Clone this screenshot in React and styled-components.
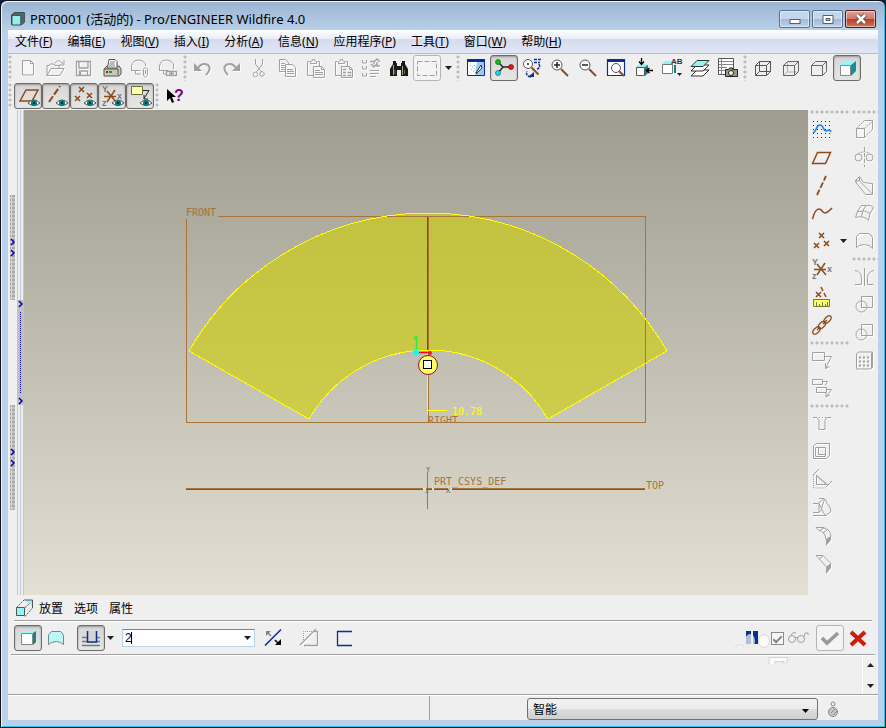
import React, { useState } from "react";
import styled, { createGlobalStyle, css } from "styled-components";

const GRAY = "#a0a0a0";
const BROWN = "#8f4a1c";
const NAVY = "#0a2f91";
const DARK = "#555555";

const P = ({ d, c = GRAY, w = 1, f = "none", dash }) => (
  <path d={d} stroke={c} strokeWidth={w} fill={f} strokeDasharray={dash} />
);

const Letter = ({ x, y, c = "#777777", size = 8, children }) => (
  <text
    x={x}
    y={y}
    fill={c}
    fontSize={size}
    fontWeight="700"
    fontFamily="Liberation Sans, sans-serif"
  >
    {children}
  </text>
);

const Eye = () => (
  <g>
    <P d="M10 17q6-6 12 0q-6 5-12 0z" c="#555555" f="#ffffff" />
    <circle cx="16" cy="17" r="3" fill="#007c7c" />
    <circle cx="16" cy="17" r="1" fill="#001818" />
  </g>
);

const Crosses = ({ points }) =>
  points.map(([x, y]) => (
    <P
      key={`${x}-${y}`}
      d={`M${x - 2} ${y - 2}l5 5M${x + 3} ${y - 2}l-5 5`}
      c={BROWN}
      w={1.6}
    />
  ));

const Csys = () => (
  <g>
    <P d="M2 10.5h12M5 16L13 4M5 5l9 11" c={BROWN} w={1.5} />
    <Letter x={0} y={6} size={9}>Y</Letter>
    <Letter x={0} y={20} size={9}>z</Letter>
    <Letter x={15} y={13} size={9}>x</Letter>
  </g>
);

const Lens = ({ x = 7, y = 7, r = 5 }) => (
  <g>
    <P
      d={`M${x + r - 1} ${y + r - 1}L${x + r + 6} ${y + r + 6}`}
      c={BROWN}
      w={2}
    />
    <circle cx={x} cy={y} r={r} fill="#ffffff" stroke={DARK} />
  </g>
);

const Clipboard = () => (
  <g>
    <P d="M8 17.5H2.5v-14h2M12.5 3.5h2v5M5.5 5.5v-2l2-1v-1h2v1l2 1v2z" />
    <P d="M8.5 8.5h8l3 3v8h-11zM16.5 8.5v3h3" f="#f6f6f6" />
  </g>
);

const icons = {
  app: (
    <g>
      <P d="M2 5l3-3h13v12l-3 3H2z" c="#333333" f="#4a6d70" />
      <P d="M2.5 5.5h11v12h-11z" c="#333333" f="#8eeaea" />
      <P d="M4 8h8M4 11h8M4 14h8" c="#d8ffff" dash="1 1" />
    </g>
  ),
  new: <P d="M4.5 2.5h8l3 3v11.5h-11zM12.5 2.5v3h3" f="#f6f6f6" />,
  open: (
    <g>
      <P d="M1 17.5v-10h2l1-1.5h4l1 1.5h4v3M1 17.5L5 10.5h13l-4 7z" />
      <P d="M9 5q3-4 6-1l2 2M18 2v5h-5" />
    </g>
  ),
  save: <P d="M2.5 3.5h14v14h-14zM5 4v6h9V4M5.5 17v-4h8v4M6.5 14v3" w={1.3} />,
  print: (
    <g>
      <P d="M2 11l3-3h12l2 3v5l-2 2H2z" c={DARK} f="#c9c9b8" />
      <P d="M5.5 10L7 1.5h6l2 2V10z" c={DARK} f="#ffffff" />
      <P d="M8 4h5M7.5 6h5M7 8h6" c="#777777" />
      <P d="M2 11h14v6" c={DARK} />
      <P d="M4 14h2" c="#d01010" w={2} />
      <P d="M7 14h3" c="#10a020" w={2} />
    </g>
  ),
  mailClip: (
    <g>
      <P d="M1.5 13V8q1-6 7-6q5 0 7 4v2M1.5 12.5h9M5.5 13v3h5" />
      <P d="M13.5 17v-6q2-3 4 0v6q-2 4-4 0zM15.5 12v4" f="#f6f6f6" />
    </g>
  ),
  mailLink: (
    <g>
      <P d="M1.5 13V8q1-6 7-6q5 0 7 4v5M1.5 12.5h9M5.5 13v3h3" />
      <P d="M8.5 13.5h5v4h-5zM13.5 13.5h5v4h-5zM11 15.5h5" w={1.4} />
    </g>
  ),
  undo: (
    <g>
      <path d="M1 5v8h8z" fill={GRAY} />
      <P d="M5 10q4-6 10-3q4 4-2 10" w={2} />
    </g>
  ),
  redo: (
    <g>
      <path d="M19 5v8h-8z" fill={GRAY} />
      <P d="M15 10q-4-6-10-3q-4 4 2 10" w={2} />
    </g>
  ),
  cut: (
    <g>
      <P d="M6.5 1v5l6 8M13.5 1v5l-6 8" />
      <circle cx="6.5" cy="16.5" r="2.3" stroke={GRAY} fill="none" />
      <circle cx="13" cy="16" r="2.3" stroke={GRAY} fill="none" />
    </g>
  ),
  copy: (
    <g>
      <P d="M2.5 1.5h6l3 3v9h-9zM4 5.5h4M4 7.5h6M4 9.5h6M4 11.5h6" />
      <P d="M8.5 6.5h7l3 3v9h-10zM10 11.5h6M10 13.5h7M10 15.5h7" f="#f6f6f6" />
    </g>
  ),
  paste: (
    <g>
      <Clipboard />
      <P d="M10 12.5h5M10 14.5h8M10 16.5h8" />
    </g>
  ),
  pasteSpecial: (
    <g>
      <Clipboard />
      <P d="M10 11.5h3M10 14.5h3M10 17.5h3M14.5 14.5h4M14.5 17.5h4" w={1.6} />
    </g>
  ),
  regen: (
    <g>
      <P d="M1.5 2v3h4V2M1.5 8v3h4V8M1.5 15v3h4v-3M9 12.5h9M9 15.5h9M9 18.5h6" />
      <P d="M9 3.5h4v3M10 6l3 3l3-3M19 8h-3V4M13 4l3-3l3 3" w={1.4} />
    </g>
  ),
  find: (
    <g>
      <path
        d="M4 3h3v2h1v3h4V5h1V3h3v3l3 5v7h-7v-6H8v6H1v-7l3-5z"
        fill="#1b1b16"
      />
      <P d="M4.5 7v10M13.5 8v9" c="#a9a98e" />
      <P d="M6 12v4M15.5 12v4" c="#6d6d58" />
    </g>
  ),
  select: <P d="M.5 3.5h19v14h-19z" dash="5 2" />,
  repaint: (
    <g>
      <P d="M1.5 1.5h17v16h-17z" c={NAVY} f="#ffffff" />
      <path d="M11 4h7v13H9z" fill="#9ccbf5" />
      <path d="M1 1h18v3H1z" fill={NAVY} />
      <P d="M4 7l8 7M5 11l6 5M8 7l4 5" c="#4aa0dd" dash="1 2" />
      <P d="M15 7l-5 8M15 7l1 3l-6 6" c="#333333" f="#ffffff" />
    </g>
  ),
  spin: (
    <g>
      <P d="M4 4l5 5h8M9 9l-5 6" c="#222222" w={1.4} />
      <circle cx="4" cy="4" r="2.5" fill="#10c010" stroke="#0a500a" strokeWidth=".6" />
      <circle cx="17" cy="9" r="2.5" fill="#f01010" stroke="#600000" strokeWidth=".6" />
      <circle cx="4" cy="15" r="2.5" fill="#22d8e8" stroke="#045058" strokeWidth=".6" />
    </g>
  ),
  orient: (
    <g>
      <Lens x={6} y={6} r={4.5} />
      <circle cx="6" cy="6" r="1" fill="#222222" />
      <P d="M12 1.5h7M12 4.5h6M17 6q2 4-2 5M9 19q-6-1-4-6" c={NAVY} w={1.5} dash="3 1" />
      <path d="M6 19h6v-5z" fill={NAVY} />
    </g>
  ),
  zoomIn: (
    <g>
      <Lens />
      <P d="M4 7h6M7 4v6" c="#222222" w={1.5} />
    </g>
  ),
  zoomOut: (
    <g>
      <Lens />
      <P d="M4 7h6" c="#222222" w={1.5} />
    </g>
  ),
  refit: (
    <g>
      <P d="M1.5 1.5h17v16h-17z" c={NAVY} w={1.2} f="#ffffff" />
      <path d="M1 1h18v3H1z" fill={NAVY} />
      <P d="M13 13l5 5" c={BROWN} w={2} />
      <circle cx="10" cy="10" r="4.5" fill="#ffffff" stroke={DARK} />
    </g>
  ),
  views: (
    <g>
      <P d="M2.5 9l3-2h8l-2 2z" c="#7fe7e7" f="#a5ffff" />
      <path d="M11 9l3-2v8l-3 3z" fill="#0b8585" />
      <P d="M2.5 9.5h8v8h-8z" c={DARK} f="#ffffff" />
      <P d="M7.5 0v6M5 3.5l2.5 3l2.5-3M19 12.5h-7M15.5 10l-3 2.5l3 2.5" c="#000000" w={1.3} />
    </g>
  ),
  viewNames: (
    <g>
      <path d="M0 6l3-3h7v3z" fill="#8ff5f5" />
      <P d="M.5 6.5h10v9H.5z" c="#777777" f="#ffffff" />
      <P d="M13 7v8" c="#0b8585" w={2} />
      <Letter x={9} y={6} c="#333333">AB</Letter>
      <path d="M15 15h5l-2.5 3z" fill="#222222" />
    </g>
  ),
  layers: (
    <g>
      <P d="M1 18l6-6h12l-6 6z" c="#333333" f="#ffffff" />
      <P d="M1 13l6-6h12l-6 6z" c="#333333" f="#ffffff" />
      <P d="M1 8.5l6-6h12l-6 6z" c="#333333" f="#8ff5ee" />
    </g>
  ),
  viewManager: (
    <g>
      <P d="M.5 .5h15v16H.5z" c={DARK} f="#ffffff" />
      <P d="M3.5 1v15M1 3.5h14M1 6.5h14M1 9.5h8M1 12.5h7" c="#888888" />
      <P d="M7.5 11.5h3l1-1.5h3v1.5h5v7h-12z" c="#222222" f="#99997f" />
      <circle cx="13" cy="15" r="2.5" fill="#f3f3e8" stroke="#222222" />
    </g>
  ),
  wireframe: (
    <P d="M2.5 7.5h11v10h-11zM6.5 3.5h11v10h-11zM2.5 7.5l4-4M13.5 7.5l4-4M13.5 17.5l4-4M2.5 17.5l4-4" c={DARK} />
  ),
  hidden: (
    <g>
      <P d="M6.5 4v10h11M2.5 17.5l4-4" c="#b0b0b0" />
      <P d="M2.5 7.5h11v10h-11zM2.5 7.5l4-4h11v10l-4 4M13.5 7.5l4-4" c="#666666" />
    </g>
  ),
  noHidden: (
    <P d="M2.5 7.5h11v10h-11zM2.5 7.5l4-4h11v10l-4 4M13.5 7.5l4-4" c="#666666" />
  ),
  shaded: (
    <g>
      <path d="M3 7l4-4h12l-4 4z" fill="#8ffafa" />
      <path d="M14 7l5-4v10l-5 5z" fill="#178f92" />
      <P d="M3.5 7.5h10v10h-10z" c="#888888" f="#ffffff" />
    </g>
  ),
  planeShow: (
    <g>
      <P d="M2 15L8 4h12l-6 11z" c={BROWN} w={1.5} />
      <Eye />
    </g>
  ),
  axisShow: (
    <g>
      <P d="M3 16L14 0" c={BROWN} w={2} dash="7 2" />
      <Eye />
    </g>
  ),
  pointShow: (
    <g>
      <Crosses points={[[7, 3], [3, 12], [15, 9]]} />
      <Eye />
    </g>
  ),
  csysShow: (
    <g>
      <Csys />
      <Eye />
    </g>
  ),
  noteShow: (
    <g>
      <P d="M1.5 .5h11v8h-11z" c="#6d6d40" f="#ffffb0" />
      <P d="M13 4.5h6l-5 8M14 9v4h4" c="#222222" />
      <Eye />
    </g>
  ),
  help: (
    <g>
      <path d="M2 3v12l3-3l2 5l2-1l-2-5h4z" fill="#000000" />
      <Letter x={9} y={15} c="#800080" size={16}>?</Letter>
    </g>
  ),
  sketch: (
    <g>
      <P d="M1 2.5h18M1 6.5h18M1 10.5h18M1 14.5h18M1 18.5h18" c={NAVY} dash="1 3" />
      <P d="M1 14C5 12 4 6 8 6S11 12 14 12S17 9 19 13" c="#1587ee" w={1.6} />
    </g>
  ),
  plane: <P d="M.5 16.5L5.5 5.5h13l-5 11z" c={BROWN} w={1.5} />,
  axis: <P d="M5 20L14 1" c={BROWN} w={1.8} dash="6 2" />,
  curve: <P d="M.5 16Q3 6 7 6q2 0 4 3q3 3 9-4" c={BROWN} w={1.5} />,
  points: <Crosses points={[[9, 4], [4, 14], [14, 12]]} />,
  csys: <Csys />,
  analysis: (
    <g>
      <Crosses points={[[6, 7]]} />
      <P d="M9 0l2 4M12 6l2 4" c={BROWN} w={1.6} />
      <P d="M1.5 12.5h16v7h-16z" c="#77773c" f="#ffff66" />
      <P d="M4.5 15v4M7.5 17v2M10.5 15v4M13.5 17v2M15.5 15v4" c="#77773c" />
    </g>
  ),
  chain: (
    <g fill="none" stroke={BROWN} strokeWidth="1.3">
      <ellipse cx="4.5" cy="15.5" rx="4.5" ry="2.5" transform="rotate(-45 4.5 15.5)" />
      <ellipse cx="10" cy="10" rx="4.5" ry="2.5" transform="rotate(-45 10 10)" />
      <ellipse cx="15.5" cy="4.5" rx="4.5" ry="2.5" transform="rotate(-45 15.5 4.5)" />
      <path d="M5 15l3-3M11 9l4-4" />
    </g>
  ),
  note: <P d="M.5 2.5h12v8H.5zM12.5 6.5h7l-6 12M13.5 13v5.5l4-2" />,
  noteChain: (
    <P d="M.5 1.5h10v5H.5zM10.5 3.5h5l-2 4M4.5 9.5h10v5h-10zM14.5 11.5h5l-5 7M14 15v4l4-2" />
  ),
  hole: (
    <g>
      <P d="M1 4.5h4l2 3v9h6v-9l2-3h4" />
      <P d="M7 4.5h7" dash="1 2" />
    </g>
  ),
  shell: (
    <P d="M1.5 5l3-2.5h13v12l-3 3h-13zM3.5 6.5h10v9h-10zM6.5 6.5v7h7" />
  ),
  rib: (
    <g>
      <P d="M1.5 6v13h12" dash="1 1" />
      <P d="M1 6l6-6M14 18l6-6M4.5 6.5v9h10zM4.5 6.5L16 16" />
    </g>
  ),
  draft: (
    <P d="M1 18.5h13l5-4q0-5-4-8q-1-4-3-5H7M1 6.5h5l6-5M1 15.5h6v-9M7 15.5l3-3l-3-6M10 12.5l3 5.5M12.5 2l-3 10" />
  ),
  round: (
    <g>
      <P d="M4 2.5h7q8 2 8 9M4 2.5l3 3q6 1 7 9M8 5l4-2M11 8l4-3" />
      <path d="M14 14l5-3v4l-5 6z" fill={GRAY} />
    </g>
  ),
  chamfer: (
    <g>
      <P d="M4 2.5h7l8 8M4 2.5l3 3l7 8" />
      <P d="M7 6l4-3" />
      <path d="M14 14l5-4v5l-5 6z" fill={GRAY} />
    </g>
  ),
  extrude: (
    <g>
      <P d="M2.5 9.5h8v9h-8z" f="#f6f6f6" />
      <P d="M2.5 9.5l8-8M10.5 9.5l8-7M10.5 18.5l8-8" dash="2 1" />
      <P d="M10.5 1.5h8v9" />
    </g>
  ),
  revolve: (
    <g>
      <P d="M10.5 0v20" dash="4 2" />
      <circle cx="4.5" cy="10.5" r="3.5" fill="none" stroke={GRAY} />
      <circle cx="15.5" cy="10.5" r="3.5" fill="none" stroke={GRAY} />
      <P d="M4 6.5l6-2l6 2" dash="2 1" />
    </g>
  ),
  sweep: (
    <P d="M1.5 5.5l4-4l4 6l9 1v11h-7L2.5 8zM1.5 5.5l1 3M5.5 2v4l13 13M1.5 5.5l4 .5" />
  ),
  boundary: (
    <P d="M1.5 14.5Q3 7 7.5 2.5h9l3 2Q15 10 14.5 17.5Q10 12 1.5 14.5zM4 8.5q7-2 12 2M12 2.5Q8 7 7.5 13.5" />
  ),
  style: <P d="M2.5 16.5v-11l3-3h9q3 1 4 4v11q-3-4-8-4q-5 0-8 3z" />,
  mirror: <P d="M10.5 2v18M1 4.5q6 1 6.5 7v7M20 4.5q-6 1-6.5 7v7M1 18.5h6M13.5 18.5h6" />,
  merge: (
    <g fill="none" stroke={GRAY}>
      <path d="M7.5 2.5h11v11h-11z" />
      <circle cx="7.5" cy="12.5" r="5.5" />
    </g>
  ),
  pattern: (
    <g>
      <P d="M2.5 4l2-2h14v15l-2 2h-14z" />
      <path d="M17 3h2v14l-2 2z" fill={GRAY} />
      <P d="M5 7.5h11M5 11.5h11M5 15.5h11" w={2} dash="2 2" />
    </g>
  ),
  placement: (
    <g>
      <P d="M2.5 9.5l8-8M11 9.5l8-7M11 18.5l7-8" c="#555555" dash="2 1" />
      <path d="M10 2h9v8l-3-5z" fill="#8ff5f5" />
      <P d="M10.5 2h8v8" c="#555555" />
      <P d="M2.5 9.5h8v8h-8z" c="#555555" f="#8ff5f5" />
    </g>
  ),
  solid: (
    <g>
      <path d="M3 5l2-2h13l-2 3z" fill="#8ffafa" />
      <path d="M15 5l3-2v11l-3 3z" fill="#148486" />
      <P d="M3.5 5.5h11v11h-11z" c="#888888" f="#ffffff" />
    </g>
  ),
  surface: (
    <P d="M2.5 16.5v-10l3-3h9q2 1 3 4v9q-3-3-7-3q-5 0-8 3z" c="#6a8c8c" f="#bdf8f8" />
  ),
  depth: (
    <g>
      <P d="M1 9.5h18M1 13.5h18M1 17.5h18" c="#777777" w={1.5} />
      <P d="M6.5 3v11h9V3" c={NAVY} w={1.5} f="#d5d5d5" />
    </g>
  ),
  flip: (
    <g>
      <P d="M2 17.5L18 1.5" c={NAVY} w={1.6} />
      <path d="M3 3h5L3 8z" fill="#83837a" />
      <P d="M5 5l3 3" c="#83837a" w={1.5} />
      <path d="M18 11v6h-6z" fill="#000000" />
      <P d="M12 12l3 3" c="#000000" w={1.5} />
    </g>
  ),
  removeMaterial: (
    <g>
      <P d="M4.5 14V3.5H14" dash="1 1" />
      <P d="M5 17.5h13.5v-14H15M1 17L17 1" w={1.3} />
    </g>
  ),
  thicken: <P d="M17 3.5H2.5v14H17" c={NAVY} w={1.3} />,
  glasses: (
    <g fill="none" stroke={GRAY}>
      <circle cx="4" cy="11" r="3.5" />
      <circle cx="13" cy="11" r="3.5" />
      <path d="M7 9.5h3M3 7q2-4 5-2M16 9l1-4h3v2" />
    </g>
  ),
  confirm: <P d="M2 10l5 5L18 5" c="#999999" w={3.5} />,
  cancel: <P d="M3 4l14 13M17 4L3 17" c="#cf1c08" w={4} />,
  ball: (
    <g>
      <circle cx="10" cy="5" r="2" fill="none" stroke="#888888" />
      <circle cx="10" cy="13" r="4.5" fill="#c9c9c9" stroke="#888888" />
      <P d="M8 14l4-4M10 16l4-4" c="#888888" />
    </g>
  ),
};

const Icon = ({ name, size = 20 }) => (
  <IconSvg viewBox="0 0 20 20" width={size} height={size} aria-hidden="true">
    {icons[name]}
  </IconSvg>
);

const Tool = ({ name, label, pressed, framed, disabled }) => (
  <ToolButton
    type="button"
    title={label}
    aria-label={label}
    $pressed={pressed}
    $framed={framed}
    $disabled={disabled}
    disabled={disabled}
  >
    <Icon name={name} />
  </ToolButton>
);

const DropArrow = ({ label, narrow }) => (
  <ArrowButton type="button" aria-label={label} $narrow={narrow}>
    <svg width="7" height="4" viewBox="0 0 7 4" aria-hidden="true">
      <path d="M0 0h7L3.5 4z" fill="#222222" />
    </svg>
  </ArrowButton>
);

const renderTools = (tools) =>
  tools.map(([name, label, state]) => (
    <Tool
      key={label}
      name={name}
      label={label}
      pressed={state === "pressed"}
      framed={state === "framed"}
      disabled={state === "off"}
    />
  ));

const menus = [
  ["文件", "F"],
  ["编辑", "E"],
  ["视图", "V"],
  ["插入", "I"],
  ["分析", "A"],
  ["信息", "N"],
  ["应用程序", "P"],
  ["工具", "T"],
  ["窗口", "W"],
  ["帮助", "H"],
];

const fileTools = [
  ["new", "新建", "off"],
  ["open", "打开", "off"],
  ["save", "保存", "off"],
  ["print", "打印"],
  ["mailClip", "发送附件", "off"],
  ["mailLink", "发送链接", "off"],
];

const editTools = [
  ["undo", "撤消", "off"],
  ["redo", "重做", "off"],
  ["cut", "剪切", "off"],
  ["copy", "复制", "off"],
  ["paste", "粘贴", "off"],
  ["pasteSpecial", "选择性粘贴", "off"],
  ["regen", "再生", "off"],
  ["find", "查找"],
  ["select", "选取框", "framed"],
];

const viewTools = [
  ["repaint", "重画"],
  ["spin", "旋转中心", "pressed"],
  ["orient", "定向模式"],
  ["zoomIn", "放大"],
  ["zoomOut", "缩小"],
  ["refit", "重新调整"],
  ["views", "重定向"],
  ["viewNames", "已命名视图"],
  ["layers", "层"],
  ["viewManager", "视图管理器"],
];

const displayTools = [
  ["wireframe", "线框"],
  ["hidden", "隐藏线"],
  ["noHidden", "无隐藏线"],
  ["shaded", "着色", "pressed"],
];

const datumDisplayTools = [
  ["planeShow", "平面显示", "pressed"],
  ["axisShow", "轴显示", "pressed"],
  ["pointShow", "点显示", "pressed"],
  ["csysShow", "坐标系显示", "pressed"],
  ["noteShow", "注释显示", "pressed"],
];

const datumTools = [
  ["sketch", "草绘"],
  ["plane", "基准平面"],
  ["axis", "基准轴"],
  ["curve", "基准曲线"],
  ["points", "基准点"],
  ["csys", "基准坐标系"],
  ["analysis", "分析特征"],
  ["chain", "参照"],
];

const noteTools = [
  ["note", "注释"],
  ["noteChain", "注释传播"],
];

const engineeringTools = [
  ["hole", "孔"],
  ["shell", "壳"],
  ["rib", "筋"],
  ["draft", "拔模"],
  ["round", "倒圆角"],
  ["chamfer", "倒角"],
];

const shapeTools = [
  ["extrude", "拉伸"],
  ["revolve", "旋转"],
  ["sweep", "扫描"],
  ["boundary", "边界混合"],
  ["style", "造型"],
];

const featureTools = [
  ["mirror", "镜像"],
  ["merge", "合并"],
  ["merge", "修剪"],
  ["pattern", "阵列"],
];

const SideToolGroup = ({ tools, disabled }) => (
  <SideGroup>
    <SideGrip />
    {tools.map(([name, label]) => (
      <SideRow key={label}>
        <Tool name={name} label={label} disabled={disabled} />
        {name === "points" && <DropArrow label="基准点选项" />}
      </SideRow>
    ))}
  </SideGroup>
);

const Chevron = () => (
  <svg width="5" height="8" viewBox="0 0 5 8" aria-hidden="true">
    <path d="M1 1l3 3l-3 3" fill="none" stroke="#0000b8" strokeWidth="1.5" />
  </svg>
);

const Sashes = () => (
  <SashArea>
    <SashColumn>
      <TreeSash>
        <Chevron />
        <Chevron />
      </TreeSash>
      <TreeSash>
        <Chevron />
        <Chevron />
      </TreeSash>
    </SashColumn>
    <Splitter>
      <SplitterRail />
      <SplitterHandle>
        <Chevron />
        <SplitterDots />
        <Chevron />
      </SplitterHandle>
      <SplitterRail />
    </Splitter>
  </SashArea>
);

const fanPath =
  "M165 241A276 276 0 0 1 643 241L524 309A138 138 0 0 0 285 309Z";

const Model = () => (
  <ModelSvg viewBox="0 0 784 485" role="img" aria-label="PRT0001">
    <defs>
      <linearGradient id="fan" x1="0" y1="0" x2="0" y2="1">
        <stop offset="0" stopColor="#c2c140" />
        <stop offset="1" stopColor="#cdcc4b" />
      </linearGradient>
      <clipPath id="front-plane">
        <rect x="162" y="106" width="460" height="206" />
      </clipPath>
    </defs>

    <path d={fanPath} fill="url(#fan)" />
    <g fill="none" stroke="#a8743a" shapeRendering="crispEdges">
      <path d="M194 106.5H621.5V312.5H162.5V109" />
      <path d="M404.5 107V312" />
      <path d="M403.5 107V241" stroke="#5f5a33" />
      <path d="M162 378.5H621" />
      <path d="M162 379.5H621" stroke="#6b5846" />
      <path d="M403.5 362V399" />
    </g>
    <path
      d={fanPath}
      fill="none"
      stroke="#ffff00"
      shapeRendering="crispEdges"
    />

    <path d="M399 379h3M408 379h2M424 379h4" stroke="#e6e3d8" strokeWidth="2" />
    <path
      d="M403.5 241V305M404 300.5H423"
      stroke="#ffff00"
      shapeRendering="crispEdges"
    />
    <path d="M392.5 228V241" stroke="#33ee33" strokeWidth="1.5" />
    <path d="M395 242.5H405" stroke="#ff0022" strokeWidth="1.5" />
    <circle cx="392" cy="228" r="2" fill="#33ee33" />
    <circle cx="392" cy="242" r="3" fill="#00ffff" />
    <circle cx="406" cy="243" r="2" fill="#e02030" />
    <circle cx="404" cy="255" r="9.5" fill="#ffff66" stroke="#8b1030" />
    <rect
      x="399.5"
      y="250.5"
      width="8"
      height="8"
      fill="#ffffff"
      stroke="#000000"
    />

    <StrokeText x="162" y="106">FRONT</StrokeText>
    <g clipPath="url(#front-plane)">
      <StrokeText x="404" y="314">RIGHT</StrokeText>
    </g>
    <StrokeText x="410" y="375">PRT_CSYS_DEF</StrokeText>
    <StrokeText x="622" y="379">TOP</StrokeText>
    <StrokeText x="428" y="305" $color="#ffff00">10.78</StrokeText>
    <AxisText x="402" y="362">Y</AxisText>
    <AxisText x="422" y="383">X</AxisText>
    <AxisText x="401" y="383">z</AxisText>
  </ModelSvg>
);

const Dashboard = () => {
  const [depth, setDepth] = useState("2");
  const [preview, setPreview] = useState(true);

  return (
    <>
      <DashTabs>
        <Icon name="placement" />
        <DashTab type="button">放置</DashTab>
        <DashTab type="button">选项</DashTab>
        <DashTab type="button">属性</DashTab>
      </DashTabs>
      <Rule $inset="6px" />
      <DashTools>
        <ButtonPair>
          <Tool name="solid" label="实体" pressed />
          <Tool name="surface" label="曲面" />
        </ButtonPair>
        <ButtonPair>
          <Tool name="depth" label="深度选项" pressed />
          <DropArrow label="更多深度选项" narrow />
        </ButtonPair>
        <DepthBox>
          <DepthInput
            aria-label="深度"
            value={depth}
            onChange={(e) => setDepth(e.target.value)}
          />
          <TextCaret />
          <DropArrow label="最近使用的值" />
        </DepthBox>
        <DashActions>
          <SmallButton type="button" aria-label="反向">
            <Icon name="flip" />
          </SmallButton>
          <SmallButton type="button" aria-label="移除材料" $disabled disabled>
            <Icon name="removeMaterial" />
          </SmallButton>
          <SmallButton type="button" aria-label="加厚草绘">
            <Icon name="thicken" />
          </SmallButton>
        </DashActions>
        <DashEnd>
          <PauseButton type="button" aria-label="暂停">
            <svg width="36" height="20" viewBox="0 0 36 20" aria-hidden="true">
              <path d="M11 3h5v13h-5zM18 3h5v13h-5z" fill="#003394" />
              <ellipse cx="15" cy="13" rx="5" ry="7" fill="#eeeeee" opacity=".75" />
              <ellipse cx="29" cy="13" rx="5.5" ry="6.5" fill="#fafafa" stroke="#d8d8d8" />
              <path d="M0 19q5-4 9 0" fill="#fafafa" stroke="#d8d8d8" />
            </svg>
          </PauseButton>
          <PreviewLabel>
            <PreviewCheck
              type="checkbox"
              aria-label="预览"
              checked={preview}
              onChange={(e) => setPreview(e.target.checked)}
            />
            <Icon name="glasses" />
          </PreviewLabel>
          <ButtonPair>
            <Tool name="confirm" label="确定" framed />
            <Tool name="cancel" label="取消" />
          </ButtonPair>
        </DashEnd>
      </DashTools>
      <Rule $inset="3px" />
    </>
  );
};

const App = () => {
  return (
    <>
      <GlobalStyle />
      <Window>
        <TitleBar>
          <Icon name="app" size={16} />
          <Title>PRT0001 (活动的) - Pro/ENGINEER Wildfire 4.0</Title>
          <CaptionButton type="button" aria-label="最小化">
            <svg width="12" height="12" viewBox="0 0 12 12" aria-hidden="true">
              <rect x="1" y="6.5" width="10" height="4" fill="#ffffff" stroke="#555b70" />
            </svg>
          </CaptionButton>
          <CaptionButton type="button" aria-label="最大化">
            <svg width="12" height="12" viewBox="0 0 12 12" aria-hidden="true">
              <path d="M1 2.5h10v8H1z" fill="#ffffff" stroke="#555b70" />
              <path d="M4 5.5h4v2H4z" fill="#a8bfdc" stroke="#555b70" />
            </svg>
          </CaptionButton>
          <CaptionButton type="button" aria-label="关闭" $close>
            <svg width="12" height="12" viewBox="0 0 12 12" aria-hidden="true">
              <path d="M2 2l8 8M10 2l-8 8" stroke="#5a4a50" strokeWidth="4.5" />
              <path d="M2 2l8 8M10 2l-8 8" stroke="#ffffff" strokeWidth="2.5" />
            </svg>
          </CaptionButton>
        </TitleBar>

        <MenuBar>
          {menus.map(([label, key]) => (
            <MenuButton type="button" key={key}>
              {label}(<u>{key}</u>)
            </MenuButton>
          ))}
        </MenuBar>

        <Toolbar>
          <ToolGroup>
            <Grip />
            {renderTools(fileTools)}
          </ToolGroup>
          <ToolGroup>
            <Grip />
            {renderTools(editTools)}
            <DropArrow label="选取框选项" />
          </ToolGroup>
          <ToolGroup>
            <Grip />
            {renderTools(viewTools)}
          </ToolGroup>
          <ToolGroup>
            <Grip />
            {renderTools(displayTools)}
          </ToolGroup>
        </Toolbar>
        <Toolbar>
          <ToolGroup>
            <Grip />
            {renderTools(datumDisplayTools)}
          </ToolGroup>
          <ToolGroup>
            <Grip />
            <Tool name="help" label="上下文帮助" />
          </ToolGroup>
        </Toolbar>

        <Workspace>
          <Sashes />
          <Viewport>
            <Model />
          </Viewport>
          <SideTools>
            <SideColumn $wide>
              <SideToolGroup tools={datumTools} />
              <SideToolGroup tools={noteTools} disabled />
              <SideToolGroup tools={engineeringTools} disabled />
            </SideColumn>
            <SideColumn>
              <SideToolGroup tools={shapeTools} disabled />
              <SideToolGroup tools={featureTools} disabled />
            </SideColumn>
          </SideTools>
        </Workspace>

        <Dashboard />

        <MessageArea>
          <svg width="22" height="9" viewBox="0 0 22 9" aria-hidden="true">
            <path d="M1 8V1.5h19l-2 6" fill="#fafafa" stroke="#d4d4d4" />
            <path d="M7 8V5.5h9V8" fill="#eeeeee" stroke="#d4d4d4" />
          </svg>
          <MessageScroll>
            <ScrollButton type="button" aria-label="向上">
              <svg width="7" height="4" viewBox="0 0 7 4" aria-hidden="true">
                <path d="M0 4h7L3.5 0z" fill="#222222" />
              </svg>
            </ScrollButton>
            <ScrollButton type="button" aria-label="向下">
              <svg width="7" height="4" viewBox="0 0 7 4" aria-hidden="true">
                <path d="M0 0h7L3.5 4z" fill="#222222" />
              </svg>
            </ScrollButton>
          </MessageScroll>
        </MessageArea>
        <Rule $inset="0" />
        <StatusBar>
          <StatusCell />
          <FilterCell>
            <FilterBox>
              <FilterSelect aria-label="过滤器" defaultValue="智能">
                <option>智能</option>
              </FilterSelect>
              <svg width="7" height="4" viewBox="0 0 7 4" aria-hidden="true">
                <path d="M0 0h7L3.5 4z" fill="#000000" />
              </svg>
            </FilterBox>
            <Icon name="ball" />
          </FilterCell>
        </StatusBar>
      </Window>
    </>
  );
};

export default App;

const GlobalStyle = createGlobalStyle`
  *,
  *::before {
    box-sizing: border-box;
  }

  body {
    margin: 0;
    background: #0b1e3f;
    color: #000000;
    font-family: "Noto Sans", "Noto Sans CJK SC", sans-serif;
    font-size: 12px;
    line-height: 16px;
  }

  button,
  input,
  select {
    font: inherit;
    color: inherit;
    margin: 0;
    padding: 0;
  }

  button {
    border: 0;
    background: none;
  }
`;

const Window = styled.div`
  display: flex;
  flex-direction: column;
  min-height: 100vh;
  padding: 0 7px 7px;
  border: 1px solid #10131a;
  border-radius: 7px 7px 0 0;
  background: linear-gradient(#9ab3d1, #b9d1ea 30px);
  box-shadow: inset 1px 1px 0 #eef5fc, inset -1px -1px 0 #27c4e6;
`;

const TitleBar = styled.header`
  display: flex;
  align-items: center;
  gap: 2px;
  height: 29px;
  padding: 6px 2px 0 2px;
`;

const Title = styled.h1`
  flex: 1;
  margin: 0 0 0 2px;
  font-size: 13px;
  font-weight: 400;
  line-height: 16px;
  white-space: nowrap;
`;

const CaptionButton = styled.button`
  display: flex;
  align-items: center;
  justify-content: center;
  width: 31px;
  height: 18px;
  border: 1px solid #56708f;
  border-radius: 2px;
  background: linear-gradient(#c4d6eb 50%, #a3bad7 50%, #b9d0ea);
  box-shadow: inset 0 0 0 1px rgba(255, 255, 255, 0.5);

  ${({ $close }) =>
    $close &&
    css`
      border-color: #501820;
      background: linear-gradient(#e2a093, #cf7866 50%, #b83a22 50%, #d0765a);
    `}
`;

const MenuBar = styled.nav`
  display: flex;
  align-items: center;
  gap: 15px;
  height: 24px;
  padding-left: 7px;
  border-bottom: 1px solid #b4bccb;
  background: linear-gradient(#ffffff, #e8ecf6 9px, #d5dbed 9px, #e2e7f5);
`;

const MenuButton = styled.button`
  white-space: nowrap;
`;

const Toolbar = styled.div`
  display: flex;
  flex-wrap: wrap;
  background: #efefef;
`;

const ToolGroup = styled.div`
  display: flex;
  align-items: center;
  height: 28px;
  padding-right: 1px;
`;

const Grip = styled.span`
  width: 6px;
  height: 26px;
  background: radial-gradient(circle at 2px 2px, #bcbcbc 1px, transparent 2px)
    0 0 / 6px 5px;
`;

const IconSvg = styled.svg`
  flex: none;
  overflow: visible;
`;

const pressedStyle = css`
  border-color: #6c6c6c;
  background: linear-gradient(#d6d6d6, #e6e6e6);
  box-shadow: inset 0 1px 2px rgba(0, 0, 0, 0.3);
`;

const ToolButton = styled.button`
  display: flex;
  align-items: center;
  justify-content: center;
  width: 28px;
  height: 26px;
  border: 1px solid transparent;
  border-radius: 3px;
  ${({ $pressed }) => $pressed && pressedStyle}
  ${({ $framed }) =>
    $framed &&
    css`
      border-color: #b4b4b4;
      background: #f4f4f4;
    `}

  ${IconSvg} {
    filter: ${({ $disabled }) =>
      $disabled ? "drop-shadow(1px 1px 0 #ffffff)" : "none"};
  }
`;

const ArrowButton = styled.button`
  display: flex;
  align-items: center;
  justify-content: center;
  width: ${({ $narrow }) => ($narrow ? "10px" : "14px")};
  height: 16px;
`;

const Workspace = styled.main`
  display: flex;
  flex: 1;
  background: #efefef;
`;

const SashArea = styled.div`
  display: flex;
  width: 16px;
`;

const SashColumn = styled.div`
  display: flex;
  flex-direction: column;
  justify-content: center;
  gap: 105px;
  width: 9px;
  padding-left: 2px;
`;

const TreeSash = styled.div`
  display: flex;
  flex-direction: column;
  align-items: center;
  justify-content: center;
  gap: 3px;
  width: 5px;
  height: 105px;
  background:
    linear-gradient(#d6d6d6, #d6d6d6) 1px 0 / 1px 100% no-repeat,
    repeating-linear-gradient(#a8a8a8 0 2px, #c6c6c6 2px 4px);
`;

const Splitter = styled.div`
  display: flex;
  flex-direction: column;
  width: 7px;
`;

const SplitterRail = styled.div`
  flex: 1;
  border: solid #b9c9dc;
  border-width: 0 1px;
  background: linear-gradient(#b9c9dc, #b9c9dc) 2px 0 / 1px 100% no-repeat;
`;

const SplitterHandle = styled.div`
  display: flex;
  flex-direction: column;
  align-items: center;
  justify-content: space-between;
  height: 105px;
  background: #c2c2c2;
`;

const SplitterDots = styled.div`
  flex: 1;
  margin: 4px 0;
  border-left: 1px dotted #0000a0;
`;

const Viewport = styled.section`
  flex: 1;
  min-width: 0;
  background: linear-gradient(#9e9b8f, #e3e0d3);
`;

const ModelSvg = styled.svg`
  display: block;
  width: 100%;
  height: 100%;
`;

const StrokeText = styled.text`
  fill: ${({ $color }) => $color || "#a8743a"};
  font-family: "DejaVu Sans Mono", monospace;
  font-size: 10px;
`;

const AxisText = styled.text`
  fill: #6b6259;
  font-family: "DejaVu Sans Mono", monospace;
  font-size: 7px;
`;

const SideTools = styled.aside`
  display: flex;
  width: 70px;
`;

const SideColumn = styled.div`
  width: ${({ $wide }) => ($wide ? "42px" : "28px")};
`;

const SideGroup = styled.div`
  padding-bottom: 2px;
`;

const SideGrip = styled.div`
  height: 5px;
  margin-left: 2px;
  background: radial-gradient(circle at 2px 2px, #bcbcbc 1px, transparent 2px)
    0 0 / 5px 6px;
`;

const SideRow = styled.div`
  display: flex;
  align-items: center;
  height: 28px;
`;

const DashTabs = styled.div`
  display: flex;
  align-items: center;
  gap: 11px;
  height: 25px;
  padding-left: 6px;
  background: #efefef;

  ${IconSvg} {
    margin-right: -6px;
  }
`;

const DashTab = styled.button`
  font-family: "Noto Sans CJK SC", sans-serif;
`;

const Rule = styled.div`
  padding: 0 ${({ $inset }) => $inset};
  background: #efefef;

  &::before {
    content: "";
    display: block;
    height: 2px;
    border-top: 1px solid #a0a0a0;
    border-bottom: 1px solid #ffffff;
  }
`;

const DashTools = styled.div`
  display: flex;
  align-items: center;
  gap: 7px;
  height: 32px;
  padding: 0 6px;
  background: #efefef;
`;

const ButtonPair = styled.div`
  display: flex;
  align-items: center;
`;

const DepthBox = styled.div`
  position: relative;
  display: flex;
  align-items: center;
  width: 133px;
  height: 18px;
  border: 1px solid #b5d5ec;
  border-top-color: #4e93c4;
  background: #ffffff;
`;

const DepthInput = styled.input`
  flex: 1;
  min-width: 0;
  padding-left: 2px;
  border: 0;
  outline: 0;
  background: transparent;
  font-family: "Liberation Sans", sans-serif;
`;

const TextCaret = styled.span`
  position: absolute;
  left: 8px;
  top: 2px;
  width: 1px;
  height: 12px;
  background: #000000;
`;

const DashActions = styled.div`
  display: flex;
  gap: 14px;
`;

const SmallButton = styled.button`
  display: flex;
  justify-content: center;
  width: 22px;

  ${IconSvg} {
    filter: ${({ $disabled }) =>
      $disabled ? "drop-shadow(1px 1px 0 #ffffff)" : "none"};
  }
`;

const DashEnd = styled.div`
  display: flex;
  align-items: center;
  margin-left: auto;
`;

const PauseButton = styled.button`
  display: flex;
`;

const PreviewLabel = styled.label`
  display: flex;
  align-items: center;
  gap: 4px;
  margin-right: 8px;
`;

const PreviewCheck = styled.input`
  appearance: none;
  display: grid;
  place-items: center;
  width: 13px;
  height: 13px;
  border: 1px solid #8c8c8c;
  background: #f6f6f6;

  &:checked::before {
    content: "";
    width: 9px;
    height: 5px;
    border: solid #858585;
    border-width: 0 0 2px 2px;
    transform: rotate(-45deg);
  }
`;

const MessageArea = styled.div`
  display: flex;
  justify-content: flex-end;
  gap: 72px;
  height: 38px;
  background: #efefef;
`;

const MessageScroll = styled.div`
  display: flex;
  flex-direction: column;
  justify-content: space-between;
  width: 16px;
  border-left: 1px solid #ffffff;
  background: #f0f0f0;
`;

const ScrollButton = styled.button`
  display: flex;
  align-items: center;
  justify-content: center;
  height: 17px;
`;

const StatusBar = styled.footer`
  display: grid;
  grid-template-columns: 48.5% 1fr;
  height: 24px;
  background: #efefef;
`;

const StatusCell = styled.div`
  border-right: 1px solid #a0a0a0;
`;

const FilterCell = styled.div`
  display: flex;
  align-items: center;
  justify-content: flex-end;
  gap: 5px;
  padding: 2px 35px 0 0;
`;

const FilterBox = styled.div`
  position: relative;
  width: 291px;

  svg {
    position: absolute;
    right: 9px;
    top: 11px;
    pointer-events: none;
  }
`;

const FilterSelect = styled.select`
  appearance: none;
  display: block;
  width: 100%;
  height: 22px;
  padding: 0 5px;
  border: 1px solid #707070;
  border-radius: 3px;
  background: linear-gradient(#f2f2f2, #ebebeb 50%, #dddddd 50%, #cfcfcf);
  font-family: "Noto Sans CJK SC", sans-serif;
`;
